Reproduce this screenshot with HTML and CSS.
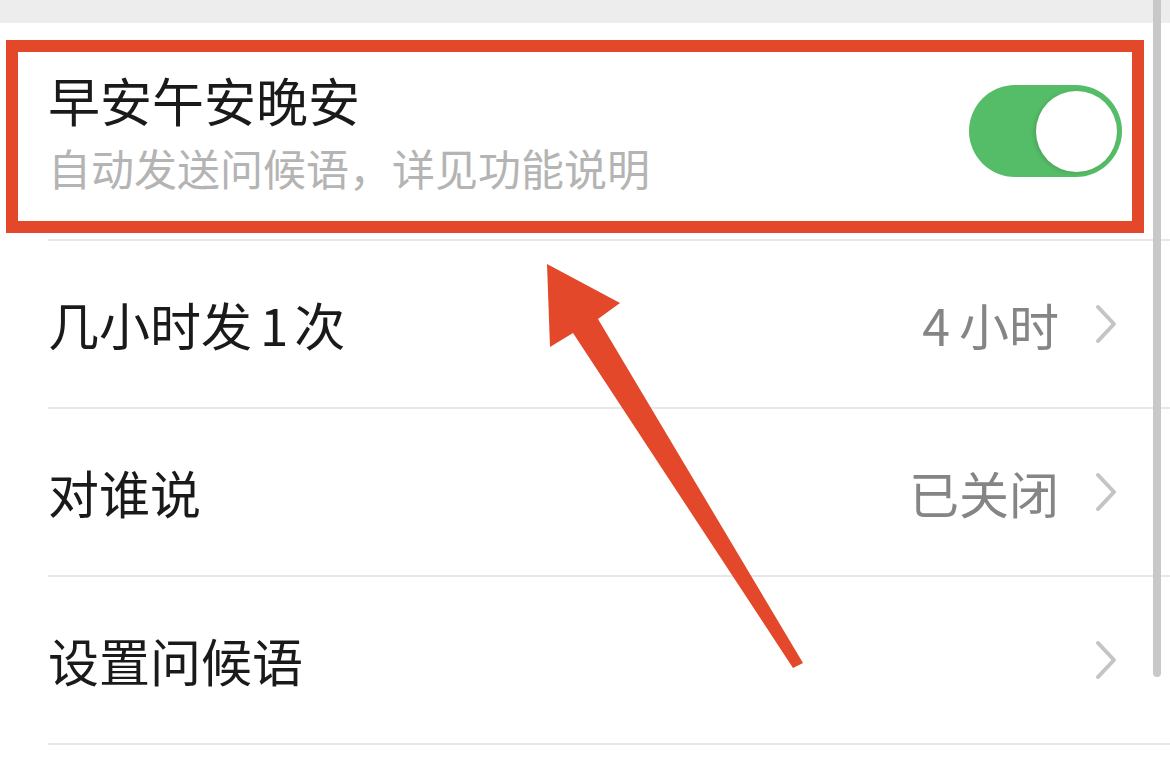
FILE: index.html
```html
<!DOCTYPE html>
<html lang="zh-CN">
<head>
<meta charset="utf-8">
<title>早安午安晚安</title>
<link rel="stylesheet" href="styles.css">
</head>
<body>
<div class="page">
  <div class="gap-band"></div>
  <ul class="list">
    <li class="cell cell-switch">
      <div class="cell-text">
        <div class="cell-title cell-title-main">早安午安晚安</div>
        <div class="cell-desc">自动发送问候语，详见功能说明</div>
      </div>
      <div class="switch"><span class="knob"></span></div>
    </li>
    <li class="cell">
      <div class="cell-title">几小时发<span class="num">1</span>次</div>
      <div class="cell-extra">
        <span class="cell-value"><span class="num num-lead">4</span>小时</span>
        <svg class="chev" viewBox="0 0 24 40" width="24" height="40"><polyline points="4,3 20,20 4,37" fill="none" stroke="#c4c4c4" stroke-width="4" stroke-linecap="round" stroke-linejoin="round"/></svg>
      </div>
    </li>
    <li class="cell">
      <div class="cell-title">对谁说</div>
      <div class="cell-extra">
        <span class="cell-value">已关闭</span>
        <svg class="chev" viewBox="0 0 24 40" width="24" height="40"><polyline points="4,3 20,20 4,37" fill="none" stroke="#c4c4c4" stroke-width="4" stroke-linecap="round" stroke-linejoin="round"/></svg>
      </div>
    </li>
    <li class="cell">
      <div class="cell-title">设置问候语</div>
      <div class="cell-extra">
        <svg class="chev" viewBox="0 0 24 40" width="24" height="40"><polyline points="4,3 20,20 4,37" fill="none" stroke="#c4c4c4" stroke-width="4" stroke-linecap="round" stroke-linejoin="round"/></svg>
      </div>
    </li>
  </ul>

  <div class="highlight-box"></div>
  <svg class="annot-arrow" width="1170" height="780" viewBox="0 0 1170 780">
    <polygon points="547,264 620,303 598,319 803,663 793,668 573,333 550,347" fill="#e4482a"/>
  </svg>
  <div class="scrollbar"></div>
</div>
</body>
</html>
```

FILE: styles.css
```css
* { box-sizing: border-box; }
html, body {
  margin: 0;
  padding: 0;
  background: #ffffff;
}
body {
  font-family: "Noto Sans CJK SC", "Noto Sans", sans-serif;
  color: #1a1a1a;
}
.page {
  position: relative;
  width: 1170px;
  height: 780px;
  overflow: hidden;
  background: #ffffff;
}
.gap-band {
  height: 23px;
  background: #ededed;
}
.list {
  list-style: none;
  margin: 0;
  padding: 0 0 0 48px;
}
.cell {
  display: flex;
  align-items: center;
  justify-content: space-between;
  height: 168px;
  padding-right: 52px;
  border-bottom: 2px solid #e8e8e8;
}
.cell-switch {
  height: 218px;
  padding-right: 48px;
}
.cell-text {
  display: flex;
  flex-direction: column;
  gap: 12px;
}
.cell-title {
  font-size: 51px;
  line-height: 60px;
  color: #1a1a1a;
}
.cell-title-main {
  font-size: 52px;
}
.cell-desc {
  font-size: 43px;
  line-height: 50px;
  color: #b4b4b4;
}
.num {
  margin: 0 6px 0 8px;
}
.num-lead {
  margin: 0 9px 0 0;
}
.cell-extra {
  display: flex;
  align-items: center;
  gap: 35px;
}
.cell-value {
  font-size: 50px;
  line-height: 60px;
  color: #858585;
}
.chev { display: block; }
.switch {
  position: relative;
  width: 153px;
  height: 92px;
  border-radius: 46px;
  background: #55bd67;
}
.knob {
  position: absolute;
  right: 5px;
  top: 6px;
  width: 81px;
  height: 81px;
  border-radius: 50%;
  background: #ffffff;
  box-shadow: -2px 1px 4px rgba(0,0,0,0.12);
}
.highlight-box {
  position: absolute;
  left: 6px;
  top: 40px;
  width: 1138px;
  height: 193px;
  border: 12px solid #e4482a;
}
.annot-arrow {
  position: absolute;
  left: 0;
  top: 0;
}
.scrollbar {
  position: absolute;
  left: 1153px;
  top: 0;
  width: 8px;
  height: 677px;
  background: #c8c8c8;
  border-radius: 0 0 4px 4px;
}
```
